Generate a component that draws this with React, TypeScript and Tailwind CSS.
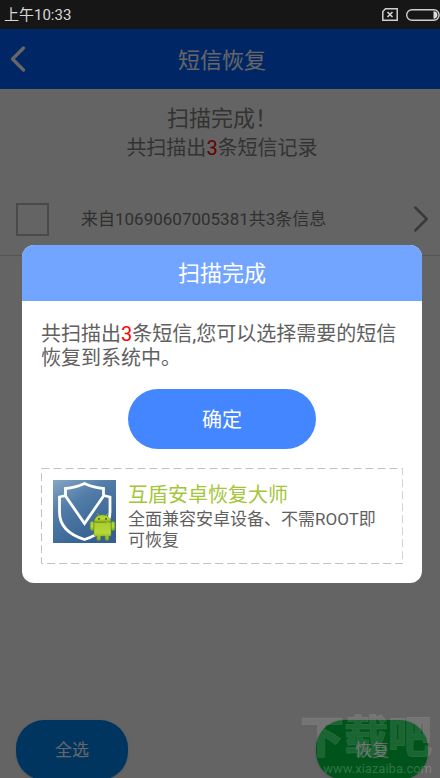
import { ChevronLeft, ChevronRight } from 'lucide-react'

function StatusBar() {
  return (
    <div className="flex h-[29px] shrink-0 items-center justify-between bg-[#161616] pl-1 text-[15px] text-[#d8d8d8]">
      <span className="pt-0.5">上午10:33</span>
      <div className="flex items-center gap-2">
        <svg width="16" height="13" viewBox="0 0 16 13" fill="none" stroke="#cfcfcf">
          <path d="M3.5 0.8H15.2V12.2H0.8V3.5Z" strokeWidth="1.5" />
          <path d="M5.5 4L10.5 9M10.5 4L5.5 9" strokeWidth="1.7" />
        </svg>
        <svg width="34" height="12" viewBox="0 0 34 12" fill="none">
          <rect x="0.7" y="0.7" width="32.4" height="10.6" rx="5.3" stroke="#cfcfcf" strokeWidth="1.4" />
          <path d="M27.500 2.300C30 2.300 31.500 4 31.500 6S30 9.700 27.500 9.700Z" fill="#dcdcdc" />
        </svg>
      </div>
    </div>
  )
}

function ShieldLogo() {
  return (
    <svg className="size-[63px] shrink-0" viewBox="0 0 63 63">
      <defs>
        <linearGradient id="tile" x1="0" y1="0" x2="0.6" y2="1">
          <stop offset="0" stopColor="#86a6c4" />
          <stop offset="0.4" stopColor="#527da8" />
          <stop offset="1" stopColor="#335f92" />
        </linearGradient>
        <linearGradient id="droid" x1="0" y1="0" x2="0" y2="1">
          <stop offset="0" stopColor="#a9cb2c" />
          <stop offset="0.55" stopColor="#b6d83a" />
          <stop offset="1" stopColor="#86ad10" />
        </linearGradient>
      </defs>
      <rect width="63" height="63" fill="url(#tile)" />
      <g fill="none" stroke="#fff" strokeWidth="2.800" strokeLinejoin="miter">
        <path d="M12.500 8.500C20 8 26 6 31.500 3.500C37 6 43 8 50.500 8.500V16L31.500 43.500L12.500 16Z" />
        <path d="M12.500 15.500L6.500 17V32C6.500 46 17 55 31.500 59.500C46 55 57 46 57 32V17L50.500 15.500" />
      </g>
      <g fill="url(#droid)" stroke="#7b9a1c" strokeWidth="0.500">
        <path d="M44.500 33.500L46.500 37M54.500 33.500L52.500 37" stroke="#9dc01f" strokeWidth="1" />
        <path d="M41 42C41.500 37.500 45 35 49.500 35S57.500 37.500 58 42Z" />
        <path d="M41 42.500H58V54.500Q58 56 56.500 56H55.800V59Q55.800 60.500 54 60.500T52.200 59V56H47.500V59Q47.500 60.500 45.700 60.500T43.900 59V56H42.500Q41 56 41 54.500Z" />
        <rect x="37.300" y="41.500" width="3.400" height="9" rx="1.600" />
        <rect x="58.400" y="41.500" width="3.400" height="9" rx="1.600" />
      </g>
      <circle cx="46" cy="38.800" r="0.900" fill="#2d3d08" />
      <circle cx="53" cy="38.800" r="0.900" fill="#2d3d08" />
    </svg>
  )
}

function PromoCard() {
  return (
    <a href="#" className="relative mt-[19px] flex h-24 gap-3 p-3">
      <svg className="absolute inset-0 size-full" fill="none">
        <rect x="0.5" y="0.5" width="99.8%" height="99%" stroke="#c0c0cc" strokeDasharray="8 4" />
      </svg>
      <ShieldLogo />
      <div className="min-w-0 pt-px">
        <h3 className="text-[20px] leading-[28px] text-[#a4c639]">互盾安卓恢复大师</h3>
        <p className="text-[17px] leading-[21px] text-[#606060]">全面兼容安卓设备、不需ROOT即可恢复</p>
      </div>
    </a>
  )
}

function ScanDialog() {
  return (
    <div className="absolute inset-x-0 top-[29px] bottom-0 flex items-center bg-black/60 pt-5 pr-[18px] pl-[22px]">
      <div role="dialog" aria-labelledby="dialog-title" className="w-full overflow-hidden rounded-xl bg-white">
        <h2 id="dialog-title" className="bg-[#72a5ff] pt-0.5 text-center text-[22px] leading-[54px] text-white">
          扫描完成
        </h2>
        <div className="px-[19px] pt-[21px] pb-[19px]">
          <p className="text-[20px] leading-[24px] text-[#606060]">
            共扫描出<span className="text-[#ff0000]">3</span>条短信,您可以选择需要的短信恢复到系统中。
          </p>
          <button className="mx-auto mt-[19px] block h-[60px] w-[188px] rounded-full bg-[#4486ff] pt-0.5 text-[20px] text-white">
            确定
          </button>
          <PromoCard />
        </div>
      </div>
    </div>
  )
}

function Watermark() {
  return (
    <div className="pointer-events-none absolute right-2 bottom-0 flex flex-col items-end text-white/10">
      <span className="text-[44px] leading-[44px] font-black [-webkit-text-stroke:1px_rgba(255,255,255,0.08)]">下载吧</span>
      <span className="text-[13px] leading-[18px] text-white/20">www.xiazaiba.com</span>
    </div>
  )
}

export default function App() {
  return (
    <div className="relative flex h-screen flex-col overflow-hidden bg-[#fafafa] font-[Roboto,'Noto_Sans_CJK_SC',sans-serif]">
      <StatusBar />
      <header className="grid h-[60px] shrink-0 grid-cols-[40px_1fr_36px] items-center bg-[#005fff] text-white">
        <button aria-label="返回" className="-ml-1">
          <ChevronLeft size={44} strokeWidth={1.800} />
        </button>
        <h1 className="pt-0.5 text-center text-[22px]">短信恢复</h1>
      </header>

      <main className="flex-1">
        <div className="h-[82px] pt-[15px] pl-1 text-center text-[#808080]">
          <p className="text-[22px] leading-[30px]">扫描完成！</p>
          <p className="text-[20px] leading-[28px]">
            共扫描出<span className="text-[#ff0000]">3</span>条短信记录
          </p>
        </div>
        <div className="flex h-[85px] items-center border-b border-[#d4d4d4] pt-3 pr-1 pl-4">
          <input
            id="sender"
            type="checkbox"
            className="size-[33px] shrink-0 appearance-none border-2 border-[#b8b8b8]"
          />
          <label htmlFor="sender" className="ml-8 flex-1 pt-0.5 text-[17px] text-[#787878]">
            来自10690607005381共3条信息
          </label>
          <ChevronRight size={46} strokeWidth={1.300} className="-mr-2 text-[#909090]" />
        </div>
      </main>

      <footer className="flex h-[76px] shrink-0 items-start justify-between bg-[#f9f9f9] pt-[18px] pr-3 pl-4 text-[17px] text-white">
        <button className="h-[60px] w-28 shrink-0 rounded-[28px] bg-[#0085f0] pt-0.5 shadow">全选</button>
        <button className="h-[60px] w-28 shrink-0 rounded-[28px] bg-[#00d245] pt-0.5 shadow">恢复</button>
      </footer>

      <ScanDialog />
      <Watermark />
    </div>
  )
}
